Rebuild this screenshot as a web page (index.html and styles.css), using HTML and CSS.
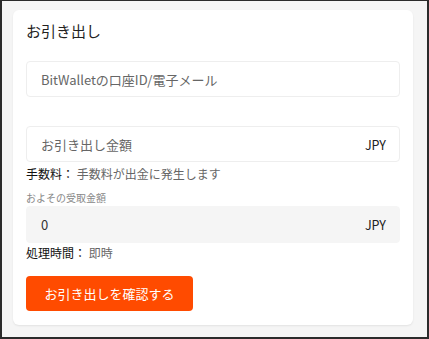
FILE: index.html
```html
<!DOCTYPE html>
<html lang="ja">

<head>
  <meta charset="UTF-8" />
  <meta name="viewport" content="width=device-width, initial-scale=1.0" />
  <title>お引き出し</title>
  <link rel="stylesheet" href="styles.css">
</head>

<body>
  <div class="frame">
    <div class="card">
      <h2 class="title">お引き出し</h2>

      <div class="field">
        <input type="text" placeholder="BitWalletの口座ID/電子メール" />
      </div>

      <div class="field amount">
        <input type="text" placeholder="お引き出し金額" />
        <span class="unit">JPY</span>
      </div>
      <div class="fee"><b>手数料：</b> 手数料が出金に発生します</div>

      <div class="label">およその受取金額</div>
      <div class="field readonly">
        <span class="value">0</span>
        <span class="unit">JPY</span>
      </div>

      <div class="time"><b>処理時間：</b> 即時</div>

      <button class="submit">お引き出しを確認する</button>
    </div>
  </div>
</body>

</html>
```

FILE: styles.css
```css
html,
body {
  margin: 0;
  padding: 0;
  height: 100%;
}

body {
  font-family: "Noto Sans CJK JP", "Noto Sans", sans-serif;
  color: #333;
  background: #2b2b2b;
}

.frame {
  box-sizing: border-box;
  margin: 1px 2px 0 2px;
  height: 336px;
  background: #f5f5f5;
  padding: 9px 14px 0 11px;
}

.card {
  background: #fff;
  border-radius: 6px;
  box-shadow: 0 1px 2px rgba(0, 0, 0, 0.08);
  padding: 8px 13px 14px 13px;
  height: 293px;
}

.title {
  margin: 0 0 17px;
  font-size: 15px;
  font-weight: normal;
  color: #222;
  line-height: 26px;
}

.field {
  display: flex;
  align-items: center;
  justify-content: space-between;
  height: 36px;
  box-sizing: border-box;
  border: 1px solid #eee;
  border-radius: 4px;
  padding: 0 13px 0 14px;
  margin-bottom: 29px;
}

.field input {
  flex: 1;
  border: none;
  outline: none;
  font-family: inherit;
  font-size: 13px;
  color: #333;
  padding: 0;
  background: transparent;
}

.field input::placeholder {
  color: #666;
}

.amount {
  margin-bottom: 2px;
}

.unit {
  font-size: 12.5px;
  color: #222;
}

.fee,
.time {
  font-size: 12px;
  color: #666;
  line-height: 20px;
}

.fee b,
.time b {
  font-weight: normal;
  color: #111;
}

.label {
  margin-top: 7px;
  font-size: 10px;
  color: #888;
  line-height: 14px;
}

.readonly {
  margin-top: 1px;
  margin-bottom: 0;
  background: #f5f5f5;
  border-color: #f5f5f5;
  height: 37px;
}

.value {
  font-size: 13px;
  color: #333;
}

.submit {
  margin-top: 13px;
  width: 167px;
  height: 35px;
  border: none;
  border-radius: 4px;
  background: #ff4b00;
  color: #fff;
  font-family: inherit;
  font-size: 13px;
  cursor: pointer;
}
```
